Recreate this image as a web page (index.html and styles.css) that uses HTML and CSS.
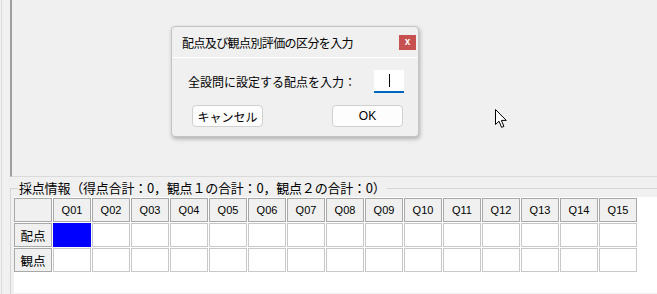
FILE: index.html
```html
<!DOCTYPE html>
<html>
  <head>
    <meta charset="utf-8">
    <title>採点</title>
    <link rel="stylesheet" href="styles.css">
  </head>
  <body>
    <div class="shell">
      <div class="upper"></div>

      <fieldset class="group">
        <legend>採点情報（得点合計：0，観点１の合計：0，観点２の合計：0）</legend>
        <div class="grid">
          <table>
            <tr>
              <th class="corner"></th>
              <th>Q01</th><th>Q02</th><th>Q03</th><th>Q04</th><th>Q05</th>
              <th>Q06</th><th>Q07</th><th>Q08</th><th>Q09</th><th>Q10</th>
              <th>Q11</th><th>Q12</th><th>Q13</th><th>Q14</th><th>Q15</th>
            </tr>
            <tr>
              <th class="rowhead">配点</th>
              <td class="selected"></td><td></td><td></td><td></td><td></td>
              <td></td><td></td><td></td><td></td><td></td>
              <td></td><td></td><td></td><td></td><td></td>
            </tr>
            <tr>
              <th class="rowhead">観点</th>
              <td></td><td></td><td></td><td></td><td></td>
              <td></td><td></td><td></td><td></td><td></td>
              <td></td><td></td><td></td><td></td><td></td>
            </tr>
          </table>
        </div>
      </fieldset>
    </div>

    <!-- modal input dialog -->
    <div class="dialog">
      <div class="titlebar">
        <span class="title">配点及び観点別評価の区分を入力</span>
        <span class="close">x</span>
      </div>
      <div class="dlg-body">
        <div class="field">
          <span class="label">全設問に設定する配点を入力：</span>
          <div class="input"><span class="caret"></span></div>
        </div>
        <div class="buttons">
          <button type="button" class="btn">キャンセル</button>
          <button type="button" class="btn ok">OK</button>
        </div>
      </div>
    </div>

    <svg class="pointer" width="13" height="20" viewBox="0 0 13 20">
      <path d="M0.5 0.5 L0.5 15.5 L4 12.2 L6.6 18.4 L8.9 17.4 L6.4 11.4 L11.3 11.4 Z" fill="#fff" stroke="#000" stroke-width="1" stroke-linejoin="miter"/>
    </svg>
  </body>
</html>
```

FILE: styles.css
```css
html, body { margin: 0; padding: 0; }
body {
  width: 657px;
  height: 294px;
  overflow: hidden;
  background: #f0f0f0;
  font-family: "Noto Sans CJK JP", "Liberation Sans", sans-serif;
  color: #000;
  position: relative;
}

.shell { height: 294px; margin-left: 1px; border-left: 1px solid #dcdcdc; display: flex; flex-direction: column; }

.upper {
  height: 176px;
  margin-left: 8px;
  border-left: 2px solid #a0a0a0;
  border-bottom: 1px solid #dadada;
  flex-shrink: 0;
}

.group {
  margin: 3px 0 0 8px;
  padding: 2px 0 0 3px;
  border: 1px solid #d5d5d5;
  border-right: none;
  border-bottom: none;
  flex: 1;
  min-width: 0;
}
.group legend {
  font-size: 13px;
  line-height: 16px;
  padding: 0 1px;
  margin-left: 4px;
  letter-spacing: -0.2px;
}

.grid { background: #fff; height: 100%; }

table { border-collapse: separate; border-spacing: 1px; margin-left: -1px; margin-top: -1px; }
th, td { padding: 0; }
th {
  background: #f0f0f0;
  border: 1px solid #a8a8a8;
  font-family: "Liberation Sans", sans-serif;
  font-weight: normal;
  font-size: 11px;
  width: 36px;
  height: 22px;
  text-align: center;
}
th.rowhead {
  font-family: "Noto Sans CJK JP", sans-serif;
  font-size: 12.5px;
}
td { border: 1px solid #c8c8c8; background: #fff; width: 36px; height: 22px; }
td.selected { background: #0000ff; border-color: #0000ff; }

.dialog {
  position: absolute;
  left: 171px;
  top: 26px;
  width: 246px;
  height: 109px;
  border: 1px solid #c4c4c4;
  border-radius: 4px;
  background: #f0f0f0;
  box-shadow: 1px 2px 4px rgba(0, 0, 0, 0.28);
  display: flex;
  flex-direction: column;
}
.titlebar {
  height: 30px;
  border-bottom: 1px solid #fff;
  display: flex;
  align-items: center;
  justify-content: space-between;
  padding: 0 2px 0 10px;
  flex-shrink: 0;
}
.title { font-size: 12px; letter-spacing: -0.6px; }
.close {
  width: 17px;
  height: 15px;
  background: #c75050;
  color: #fff;
  font-family: "Liberation Sans", sans-serif;
  font-weight: bold;
  font-size: 10px;
  line-height: 14px;
  text-align: center;
}

.dlg-body { padding: 12px 14px 0 16px; }
.field { display: flex; align-items: center; justify-content: space-between; }
.label { font-size: 12px; }
.input {
  width: 30px;
  height: 21px;
  background: #fff;
  border-bottom: 2px solid #0067c0;
  display: flex;
  align-items: center;
  justify-content: center;
}
.caret { width: 1px; height: 13px; background: #000; }

.buttons { display: flex; justify-content: space-between; margin-top: 12px; padding: 0 1px 0 4px; }
.btn {
  height: 22px;
  background: #fdfdfd;
  border: 1px solid #d0d0d0;
  border-radius: 4px;
  font-family: "Noto Sans CJK JP", sans-serif;
  font-size: 12px;
  padding: 0;
  width: 71px;
  color: #000;
}
.btn.ok { font-family: "Liberation Sans", sans-serif; font-size: 12px; }

.pointer { position: absolute; left: 495px; top: 109px; }
```
